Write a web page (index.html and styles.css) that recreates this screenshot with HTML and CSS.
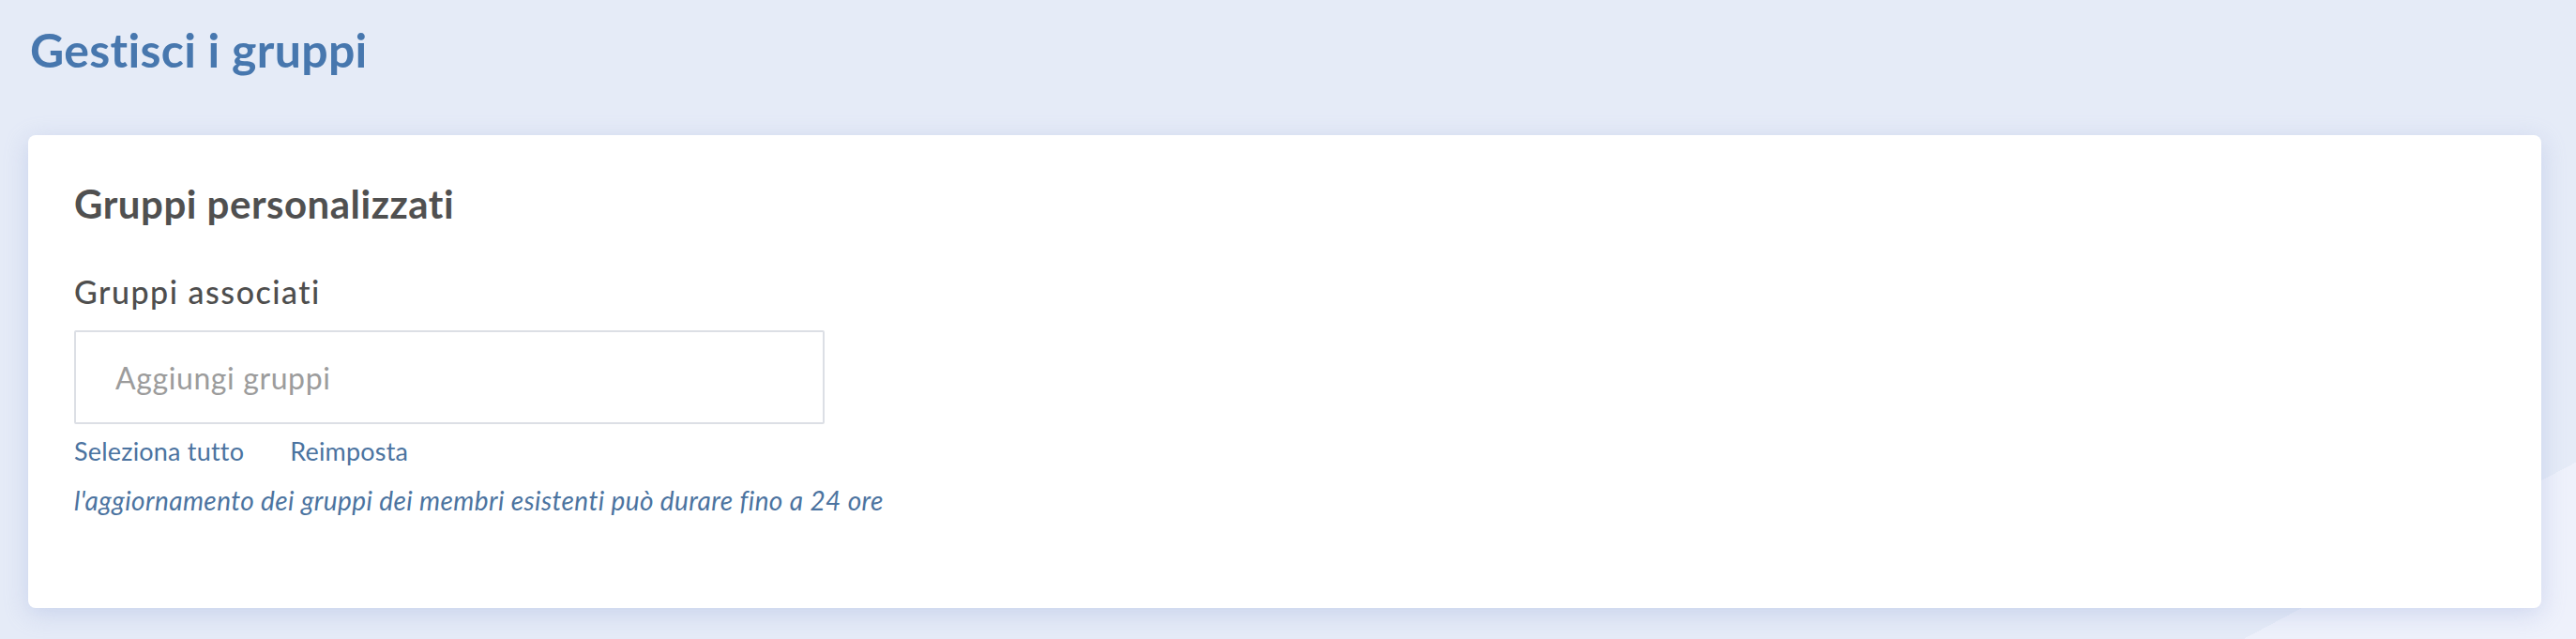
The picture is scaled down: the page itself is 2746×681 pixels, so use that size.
FILE: index.html
```html
<!DOCTYPE html>
<html lang="it">
  <head>
    <meta charset="UTF-8" />
    <meta name="viewport" content="width=device-width, initial-scale=1.0" />
    <title>Gestisci i gruppi</title>
    <link rel="stylesheet" href="styles.css">
  </head>
  <body>
    <div class="page">
      <h1 class="page-title">Gestisci i gruppi</h1>

      <section class="card">
        <h2 class="card-title">Gruppi personalizzati</h2>

        <label class="field-label" for="groups">Gruppi associati</label>
        <input class="field-input" id="groups" type="text" placeholder="Aggiungi gruppi" />

        <div class="field-actions">
          <a href="#" class="link">Seleziona tutto</a>
          <a href="#" class="link">Reimposta</a>
        </div>

        <p class="field-note">l'aggiornamento dei gruppi dei membri esistenti può durare fino a 24 ore</p>
      </section>
    </div>
  </body>
</html>
```

FILE: styles.css
```css
* {
  padding: 0;
  margin: 0;
  box-sizing: border-box;
}

body {
  font-family: Lato, "Open Sans", sans-serif;
  font-variant-ligatures: none;
  color: #555;
}

.page {
  min-height: 100vh;
  padding: 24px 37px 0 30px;
  background-color: #e5ebf7;
  /* lighter wedge in the lower right corner */
  background-image: linear-gradient(152deg, transparent 91.2%, #eef1fb 91.2%);
}

.page-title {
  font-size: 50px;
  line-height: 58px;
  font-weight: 700;
  letter-spacing: 0.3px;
  color: #4777ae;
  padding-left: 2px;
  margin-bottom: 62px;
}

.card {
  display: flex;
  flex-direction: column;
  align-items: flex-start;
  background: #fff;
  border-radius: 8px;
  padding: 48px 48px 98px 49px;
  box-shadow: 0 6px 26px rgba(140, 160, 215, 0.32);
}

.card-title {
  font-size: 42px;
  line-height: 50px;
  font-weight: 700;
  letter-spacing: 0.5px;
  color: #505050;
  margin-bottom: 49px;
}

.field-label {
  font-size: 34px;
  line-height: 40px;
  font-weight: 500;
  letter-spacing: 1.5px;
  color: #4e4e4e;
  margin-bottom: 21px;
}

.field-input {
  width: 800px;
  height: 100px;
  border: 2px solid #dcdfe5;
  border-radius: 2px;
  padding: 0 42px;
  font-family: inherit;
  font-size: 32px;
  font-weight: 400;
  letter-spacing: 0.6px;
  color: #444;
  outline: none;
  margin-bottom: 12px;
}

.field-input::placeholder {
  color: #9c9c9c;
}

.field-actions {
  display: flex;
  gap: 49px;
  margin-bottom: 18px;
}

.link {
  font-size: 27px;
  line-height: 34px;
  letter-spacing: 0.2px;
  color: #4b73a0;
  text-decoration: none;
}

.field-note {
  font-size: 28px;
  line-height: 34px;
  font-style: italic;
  letter-spacing: 0.4px;
  color: #4b73a0;
}
```
